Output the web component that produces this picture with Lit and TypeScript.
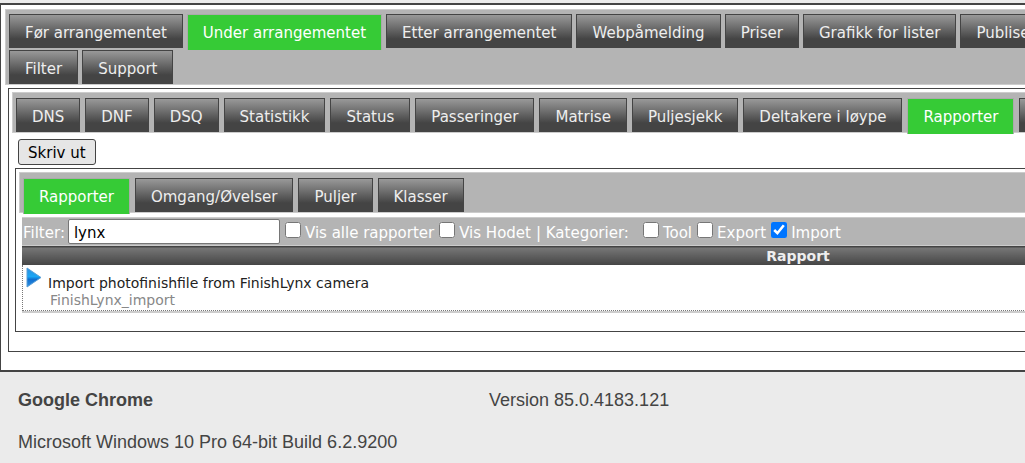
import { LitElement, html, css } from "lit";
import { customElement, property, state } from "lit/decorators.js";

@customElement("tab-bar")
class TabBar extends LitElement {
  @property({ attribute: false }) rows: string[][] = [];
  @property() active = "";

  static styles = css`
    :host {
      display: block;
      border: 1px solid #cccccc;
      background: #b4b4b4;
      padding: 4px 3px 0;
    }
    :host(.sub) {
      padding-top: 5px;
    }
    .row {
      display: flex;
      gap: 4px;
      height: 34px;
      align-items: flex-start;
    }
    :host(.sub) .row {
      gap: 5px;
    }
    .row + .row {
      margin-top: 2px;
    }
    .tab {
      box-sizing: border-box;
      flex: none;
      height: 34px;
      margin: 0;
      padding: 4px 15px 0;
      border: 1px solid #444444;
      border-radius: 0;
      background: linear-gradient(#999999, #444444 75%);
      color: #eeeeee;
      font-family: Verdana, "DejaVu Sans", sans-serif;
      font-size: 15px;
      line-height: 18px;
      white-space: nowrap;
      cursor: pointer;
    }
    .tab.active {
      height: 36px;
      padding-bottom: 3px;
      border-color: #aaaaaa;
      border-bottom: 0;
      background: #36cb36;
      color: #ffffff;
    }
  `;

  render() {
    return this.rows.map(
      (row) => html`<div class="row" role="tablist">
        ${row.map(
          (name) => html`<button
            type="button"
            role="tab"
            class="tab ${name === this.active ? "active" : ""}"
            aria-selected=${name === this.active ? "true" : "false"}
            @click=${() => (this.active = name)}
          >${name}</button>`
        )}
      </div>`
    );
  }
}

@customElement("app-root")
class AppRoot extends LitElement {
  @state() private filter = "lynx";

  private reports = [
    { title: "Import photofinishfile from FinishLynx camera", file: "FinishLynx_import" },
  ];

  static styles = css`
    :host {
      display: block;
      min-height: 100vh;
      overflow: hidden;
      box-sizing: border-box;
      padding-top: 3px;
      background: #ebebeb;
      font-family: Verdana, "DejaVu Sans", sans-serif;
      font-size: 15px;
      color: #222222;
    }
    .page {
      min-width: 1596px;
      box-sizing: border-box;
      border: 1px solid #444444;
      border-width: 2px 1px;
      background: #ffffff;
      padding: 4px 4px 18px;
    }
    .panel {
      border: 1px solid #444444;
      margin: 3px 3px 0;
      padding: 3px 3px 19px;
    }
    .print {
      display: block;
      box-sizing: border-box;
      height: 26px;
      margin: 6px 0 3px 6px;
      padding: 2px 9px 0;
      border: 1px solid #444444;
      border-radius: 3px;
      background: #e6e6e6;
      color: #000000;
      font: inherit;
      line-height: 18px;
    }
    .inner {
      margin: 0 3px 0;
      padding-bottom: 18px;
    }
    .reports {
      margin: 4px 3px 0;
    }
    .filters {
      display: flex;
      align-items: center;
      box-sizing: border-box;
      height: 29px;
      padding-left: 1px;
      border: 1px solid #cccccc;
      border-left-width: 0;
      background: #b4b4b4;
      color: #ffffff;
      line-height: 18px;
      white-space: nowrap;
    }
    .filters label,
    .categories {
      padding-top: 3px;
    }
    .text {
      box-sizing: border-box;
      width: 212px;
      height: 25px;
      margin: 0 5px 0 3px;
      padding: 3px 5px 1px;
      border: 1px solid #767676;
      border-radius: 2px;
      background: #ffffff;
      color: #000000;
      font: inherit;
      outline: none;
    }
    .tick {
      width: 16px;
      height: 16px;
      margin: 0 4px 4px 0;
      accent-color: #0075ff;
      flex: none;
    }
    .option {
      display: flex;
      align-items: center;
      margin-right: 5px;
    }
    .categories {
      margin-right: 14px;
    }
    .list {
      width: 100%;
      border-collapse: collapse;
      font-size: 14px;
    }
    .list th {
      height: 18px;
      padding: 0;
      border-top: 1px solid #444444;
      background: linear-gradient(#777777, #444444);
      color: #eeeeee;
      line-height: 16px;
    }
    .list td {
      padding: 0;
      border-bottom: 2px solid #cccccc;
    }
    .report {
      display: flex;
      gap: 5px;
      height: 44px;
      padding: 1px 3px 0;
      border: 1px dotted #777777;
      border-top: 0;
      line-height: 17px;
    }
    .play {
      flex: none;
      width: 17px;
      height: 22px;
    }
    .title {
      padding-top: 9px;
    }
    .file {
      padding-left: 2px;
      color: #888888;
    }
    footer {
      display: grid;
      grid-template-columns: 471px 1fr;
      padding: 7px 18px 0;
      font-family: "Liberation Sans", Arial, sans-serif;
      font-size: 18px;
      line-height: 42px;
      color: #444444;
    }
  `;

  private option(id: string, label: string, checked = false) {
    return html`<span class="option">
      <input class="tick" type="checkbox" id=${id} .checked=${checked} />
      <label for=${id}>${label}</label>
    </span>`;
  }

  render() {
    return html`
      <main class="page">
        <tab-bar
          active="Under arrangementet"
          .rows=${[
            ["Før arrangementet", "Under arrangementet", "Etter arrangementet", "Webpåmelding", "Priser", "Grafikk for lister", "Publisering"],
            ["Filter", "Support"],
          ]}
        ></tab-bar>
        <section class="panel">
          <tab-bar
            class="sub"
            active="Rapporter"
            .rows=${[["DNS", "DNF", "DSQ", "Statistikk", "Status", "Passeringer", "Matrise", "Puljesjekk", "Deltakere i løype", "Rapporter", "Klasser"]]}
          ></tab-bar>
          <button class="print" type="button">Skriv ut</button>
          <section class="panel inner">
            <tab-bar
              class="sub"
              active="Rapporter"
              .rows=${[["Rapporter", "Omgang/Øvelser", "Puljer", "Klasser"]]}
            ></tab-bar>
            <div class="reports">
              <div class="filters">
                <label for="filter">Filter:</label>
                <input
                  class="text"
                  id="filter"
                  type="text"
                  .value=${this.filter}
                  @input=${(e: Event) => (this.filter = (e.target as HTMLInputElement).value)}
                />
                ${this.option("all", "Vis alle rapporter")}
                ${this.option("head", "Vis Hodet")}
                <span class="categories">| Kategorier:</span>
                ${this.option("tool", "Tool")}
                ${this.option("export", "Export")}
                ${this.option("import", "Import", true)}
              </div>
              <table class="list">
                <thead>
                  <tr><th>Rapport</th></tr>
                </thead>
                <tbody>
                  ${this.reports.map(
                    (r) => html`<tr>
                      <td>
                        <div class="report">
                          <svg class="play" viewBox="0 0 17 22" aria-hidden="true">
                            <defs>
                              <linearGradient id="blue" x1="0" y1="0" x2="0" y2="1">
                                <stop offset="0" stop-color="#2c8fe0" />
                                <stop offset="0.45" stop-color="#1aa6f4" />
                                <stop offset="0.6" stop-color="#0f6fd0" />
                                <stop offset="1" stop-color="#2f8fe2" />
                              </linearGradient>
                            </defs>
                            <path d="M1 2 L15 11.5 L1 21 Z" fill="url(#blue)" stroke="#5a9fd6" stroke-linejoin="round" />
                          </svg>
                          <div>
                            <div class="title">${r.title}</div>
                            <div class="file">${r.file}</div>
                          </div>
                        </div>
                      </td>
                    </tr>`
                  )}
                </tbody>
              </table>
            </div>
          </section>
        </section>
      </main>
      <footer>
        <strong>Google Chrome</strong>
        <span>Version 85.0.4183.121</span>
        <span>Microsoft Windows 10 Pro 64-bit Build 6.2.9200</span>
      </footer>
    `;
  }
}
